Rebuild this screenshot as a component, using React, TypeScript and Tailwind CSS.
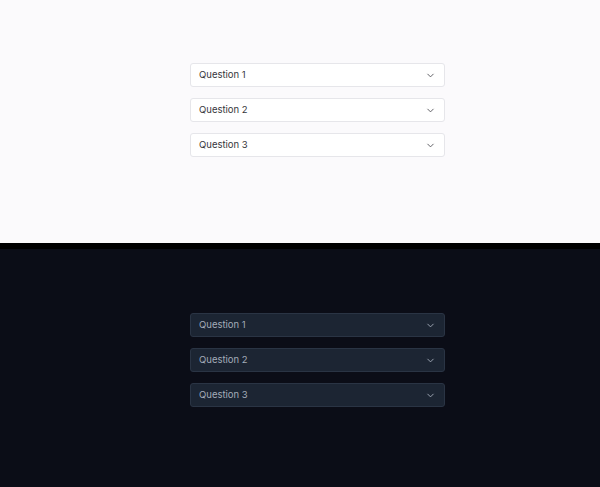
import { ChevronDown } from "lucide-react";

const questions = ["Question 1", "Question 2", "Question 3"];

function Accordion({ dark }: { dark?: boolean }) {
    return (
        <div className="ml-[190px] flex w-[255px] flex-col gap-[11px]">
            {questions.map((q) => (
                <button
                    key={q}
                    className={`flex h-[24px] items-center justify-between rounded-[3px] border pl-[8px] pr-[8px] text-left text-[9.5px] ${
                        dark
                            ? "border-[#2a3444] bg-[#1c2533] text-[#a3acb9]"
                            : "border-[#e6e6ea] bg-white text-[#36363b]"
                    }`}
                >
                    <span>{q}</span>
                    <ChevronDown
                        className={dark ? "text-[#a3acb9]" : "text-[#55555b]"}
                        size={11}
                        strokeWidth={2}
                    />
                </button>
            ))}
        </div>
    );
}

export default function App() {
    return (
        <div className="flex h-[487px] w-[600px] flex-col bg-black font-['Inter',sans-serif]">
            {/* Light */}
            <section className="h-[243px] bg-[#fbfafc] pt-[63px]">
                <Accordion />
            </section>

            {/* Dark */}
            <section className="mt-[6px] flex-1 bg-[#0b0d17] pt-[64px]">
                <Accordion dark />
            </section>
        </div>
    );
}
